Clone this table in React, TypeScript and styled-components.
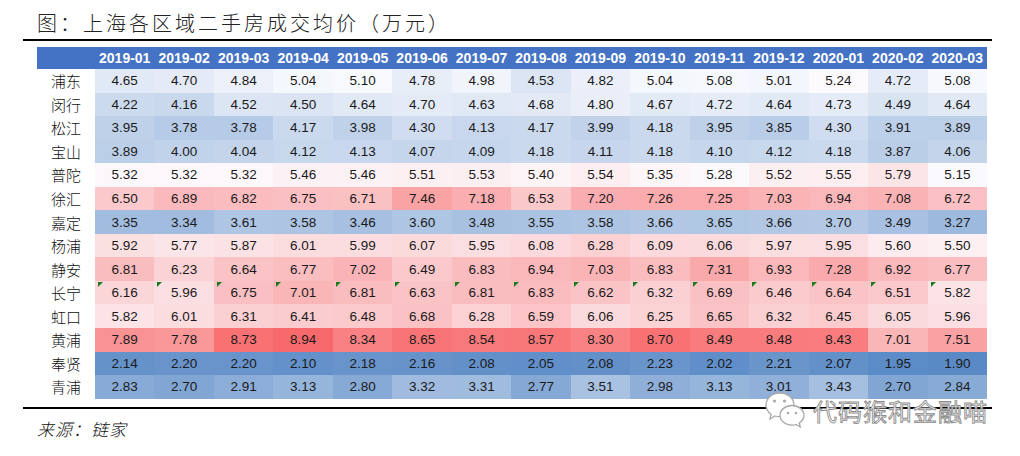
import React from "react";
import styled, { createGlobalStyle } from "styled-components";

const months = [
    "2019-01", "2019-02", "2019-03", "2019-04", "2019-05", "2019-06", "2019-07", "2019-08",
    "2019-09", "2019-10", "2019-11", "2019-12", "2020-01", "2020-02", "2020-03",
];

const rows: [string, number[]][] = [
    ["浦东", [4.65, 4.70, 4.84, 5.04, 5.10, 4.78, 4.98, 4.53, 4.82, 5.04, 5.08, 5.01, 5.24, 4.72, 5.08]],
    ["闵行", [4.22, 4.16, 4.52, 4.50, 4.64, 4.70, 4.63, 4.68, 4.80, 4.67, 4.72, 4.64, 4.73, 4.49, 4.64]],
    ["松江", [3.95, 3.78, 3.78, 4.17, 3.98, 4.30, 4.13, 4.17, 3.99, 4.18, 3.95, 3.85, 4.30, 3.91, 3.89]],
    ["宝山", [3.89, 4.00, 4.04, 4.12, 4.13, 4.07, 4.09, 4.18, 4.11, 4.18, 4.10, 4.12, 4.18, 3.87, 4.06]],
    ["普陀", [5.32, 5.32, 5.32, 5.46, 5.46, 5.51, 5.53, 5.40, 5.54, 5.35, 5.28, 5.52, 5.55, 5.79, 5.15]],
    ["徐汇", [6.50, 6.89, 6.82, 6.75, 6.71, 7.46, 7.18, 6.53, 7.20, 7.26, 7.25, 7.03, 6.94, 7.08, 6.72]],
    ["嘉定", [3.35, 3.34, 3.61, 3.58, 3.46, 3.60, 3.48, 3.55, 3.58, 3.66, 3.65, 3.66, 3.70, 3.49, 3.27]],
    ["杨浦", [5.92, 5.77, 5.87, 6.01, 5.99, 6.07, 5.95, 6.08, 6.28, 6.09, 6.06, 5.97, 5.95, 5.60, 5.50]],
    ["静安", [6.81, 6.23, 6.64, 6.77, 7.02, 6.49, 6.83, 6.94, 7.03, 6.83, 7.31, 6.93, 7.28, 6.92, 6.77]],
    ["长宁", [6.16, 5.96, 6.75, 7.01, 6.81, 6.63, 6.81, 6.83, 6.62, 6.32, 6.69, 6.46, 6.64, 6.51, 5.82]],
    ["虹口", [5.82, 6.01, 6.31, 6.41, 6.48, 6.68, 6.28, 6.59, 6.06, 6.25, 6.65, 6.32, 6.45, 6.05, 5.96]],
    ["黄浦", [7.89, 7.78, 8.73, 8.94, 8.34, 8.65, 8.54, 8.57, 8.30, 8.70, 8.49, 8.48, 8.43, 7.01, 7.51]],
    ["奉贤", [2.14, 2.20, 2.20, 2.10, 2.18, 2.16, 2.08, 2.05, 2.08, 2.23, 2.02, 2.21, 2.07, 1.95, 1.90]],
    ["青浦", [2.83, 2.70, 2.91, 3.13, 2.80, 3.32, 3.31, 2.77, 3.51, 2.98, 3.13, 3.01, 3.43, 2.70, 2.84]],
];

// excel style 3-colour scale: min blue, median white, max red
const all = rows.flatMap((r) => r[1]).sort((a, b) => a - b);
const min = all[0];
const max = all[all.length - 1];
const mid = (all[all.length / 2 - 1] + all[all.length / 2]) / 2;
const LOW = [90, 138, 198];
const MID = [252, 252, 255];
const HIGH = [248, 105, 107];

const scale = (v: number) => {
    const [a, b, t] = v < mid ? [LOW, MID, (v - min) / (mid - min)] : [MID, HIGH, (v - mid) / (max - mid)];
    const c = a.map((x, i) => Math.round(x + (b[i] - x) * t));
    return `rgb(${c.join(",")})`;
};

const GlobalStyle = createGlobalStyle`
    body {
        margin: 0;
        background: #fff;
        font-family: "Liberation Sans", "Noto Sans CJK SC", sans-serif;
    }
`;

const Page = styled.div`
    position: relative;
    width: 1020px;
    height: 456px;
    overflow: hidden;
`;

const Title = styled.div`
    padding: 8px 0 0 37px;
    height: 31px;
    font-family: "Noto Sans CJK SC", sans-serif;
    font-weight: 300;
    font-size: 20px;
    line-height: 30px;
    letter-spacing: 3px;
    color: #222;
`;

const Rule = styled.div`
    margin-left: 23px;
    width: 969px;
    height: 2px;
    background: #000;
`;

const Grid = styled.div`
    display: grid;
    grid-template-columns: 58px repeat(15, 1fr);
    grid-template-rows: 22px repeat(14, 23.55px);
    width: 950px;
    margin: 6px 0 8px 37px;
`;

const Head = styled.div`
    display: flex;
    align-items: center;
    justify-content: center;
    background: #4472c4;
    color: #fff;
    font-weight: 700;
    font-size: 14px;
`;

const Label = styled.div`
    display: flex;
    align-items: center;
    justify-content: center;
    font-family: "Noto Sans CJK SC", sans-serif;
    font-weight: 300;
    font-size: 15px;
    color: #111;
`;

const Cell = styled.div<{ $flag?: boolean }>`
    position: relative;
    display: flex;
    align-items: center;
    justify-content: center;
    font-size: 13.5px;
    color: #1a1a1a;
    &::before {
        content: "";
        display: ${(p) => (p.$flag ? "block" : "none")};
        position: absolute;
        top: 1px;
        left: 3px;
        border-top: 5px solid #1b7a1b;
        border-right: 5px solid transparent;
    }
`;

const Source = styled.div`
    margin: 10px 0 0 37px;
    font-family: "Noto Sans CJK SC", sans-serif;
    font-weight: 300;
    font-style: italic;
    font-size: 17px;
    line-height: 20px;
    letter-spacing: 1px;
    color: #111;
`;

const Watermark = styled.div`
    position: absolute;
    left: 763px;
    top: 390px;
    display: flex;
    align-items: center;
    gap: 6px;
`;

const MarkText = styled.span`
    font-family: "Noto Sans CJK SC", sans-serif;
    font-size: 24px;
    letter-spacing: 1px;
    color: #fff;
    -webkit-text-stroke: 0.9px #8c8c8c;
`;

const WeChat = () => (
    <svg width="44" height="40" viewBox="0 0 44 40" fill="#fff" stroke="#a8a8a8" strokeWidth="1.3">
        <path d="M17 3C9 3 3 8.3 3 15c0 3.8 2 7 5 9.2L7 29l5-3c1.6.5 3.3.7 5 .7 8 0 14-5.3 14-11.7S25 3 17 3z" />
        <circle cx="11.5" cy="11" r="1.6" fill="#a8a8a8" stroke="none" />
        <circle cx="21.5" cy="11" r="1.6" fill="#a8a8a8" stroke="none" />
        <path d="M29 15.5c-6.6 0-12 4.4-12 9.8s5.4 9.8 12 9.8c1.4 0 2.7-.2 4-.6l4.3 2.5-1-4c2.6-1.8 4.7-4.5 4.7-7.7 0-5.4-5.4-9.8-12-9.8z" />
        <circle cx="25" cy="23" r="1.3" fill="#a8a8a8" stroke="none" />
        <circle cx="33" cy="23" r="1.3" fill="#a8a8a8" stroke="none" />
    </svg>
);

export default function App() {
    return (
        <Page>
            <GlobalStyle />
            <Title>图：上海各区域二手房成交均价（万元）</Title>
            <Rule />
            <Grid>
                <Head />
                {months.map((m) => (
                    <Head key={m}>{m}</Head>
                ))}
                {rows.map(([name, vals]) => (
                    <React.Fragment key={name}>
                        <Label>{name}</Label>
                        {vals.map((v, i) => (
                            <Cell key={i} $flag={name === "长宁"} style={{ background: scale(v) }}>
                                {v.toFixed(2)}
                            </Cell>
                        ))}
                    </React.Fragment>
                ))}
            </Grid>
            <Rule />
            <Source>来源：链家</Source>
            <Watermark>
                <WeChat />
                <MarkText>代码猴和金融喵</MarkText>
            </Watermark>
        </Page>
    );
}
